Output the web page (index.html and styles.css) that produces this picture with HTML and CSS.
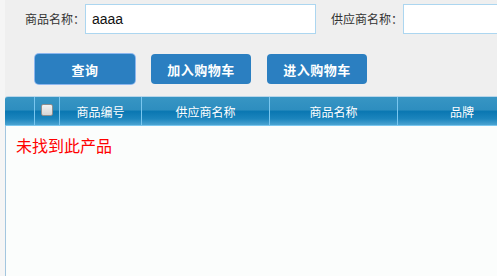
FILE: index.html
```html
<!DOCTYPE html>
<html lang="zh-CN">
<head>
<meta charset="utf-8">
<title>商品查询</title>
<link rel="stylesheet" href="styles.css">
</head>
<body>
<div class="page">
  <div class="search-row">
    <label class="field-label">商品名称：</label>
    <input class="field-input first" type="text" value="aaaa">
    <label class="field-label second-label">供应商名称：</label>
    <input class="field-input" type="text" value="">
  </div>
  <div class="button-row">
    <button class="btn btn-focus">查询</button>
    <button class="btn">加入购物车</button>
    <button class="btn">进入购物车</button>
  </div>
  <div class="grid">
    <div class="grid-head">
      <div class="col col-num"></div>
      <div class="col col-check"><span class="checkbox"></span></div>
      <div class="col col-code">商品编号</div>
      <div class="col col-wide">供应商名称</div>
      <div class="col col-wide">商品名称</div>
      <div class="col col-wide last">品牌</div>
    </div>
    <div class="grid-body">
      <div class="empty">未找到此产品</div>
    </div>
  </div>
</div>
</body>
</html>
```
FILE: styles.css
```css
html, body {
  margin: 0;
  padding: 0;
  height: 100%;
  overflow: hidden;
}
body {
  background: #f5f5f5;
  font-family: "Noto Sans CJK SC", "Liberation Sans", sans-serif;
}
.page {
  margin-left: 5px;
  height: 100%;
  background: #efefef;
  display: flex;
  flex-direction: column;
  overflow: hidden;
}
.search-row {
  display: flex;
  align-items: center;
  padding: 4px 0 0 20px;
  white-space: nowrap;
}
.field-label {
  font-size: 12px;
  color: #333;
  line-height: 30px;
  width: 60px;
  flex: none;
}
.second-label {
  width: 72px;
  margin-left: 15px;
}
.field-input {
  box-sizing: border-box;
  height: 30px;
  width: 231px;
  flex: none;
  border: 1px solid #acd6f0;
  background: #fff;
  padding: 0 6px;
  margin: 0;
  font-family: "Liberation Sans", Arial, sans-serif;
  font-size: 14px;
  color: #111;
  outline: none;
}
.button-row {
  display: flex;
  gap: 16px;
  padding: 20px 0 0 30px;
}
.btn {
  box-sizing: border-box;
  width: 100px;
  height: 30px;
  border: 0;
  border-radius: 4px;
  background: #2b7fc1;
  color: #fff;
  font-family: "Noto Sans CJK SC", sans-serif;
  font-weight: bold;
  font-size: 13px;
  letter-spacing: 0.5px;
  padding: 0;
}
.btn-focus {
  box-shadow: 0 0 0 1px #8cb6ee;
}
.grid {
  margin-top: 12px;
  flex: 1;
  display: flex;
  flex-direction: column;
  overflow: hidden;
}
.grid-head {
  display: flex;
  height: 28px;
  border-top: 1px solid #b9d6ea;
  border-bottom: 1px solid #7ac7ef;
  border-top-left-radius: 3px;
  background: linear-gradient(to bottom, #3795c4 0%, #2e8ebf 45%, #0a77b2 52%, #1c85bd 78%, #4aa3d1 100%);
  color: #fff;
  font-size: 12px;
  white-space: nowrap;
}
.col {
  flex: none;
  box-sizing: border-box;
  display: flex;
  align-items: center;
  justify-content: center;
  border-right: 1px solid #79c6ef;
}
.col-num { width: 30px; }
.col-check { width: 25px; }
.col-code { width: 82px; }
.col-wide { width: 128px; }
.last { border-right: 0; }
.checkbox {
  box-sizing: border-box;
  width: 12px;
  height: 12px;
  border: 1px solid #8e8e8e;
  border-radius: 2px;
  background: linear-gradient(to bottom, #f2f2f2, #d6d6d6);
  margin-bottom: 3px;
}
.grid-body {
  flex: 1;
  background: #fbfdfc;
  border-left: 1px solid #a3c6df;
  padding: 9px 10px;
}
.empty {
  color: #f00;
  font-size: 16px;
  line-height: 20px;
}
```
